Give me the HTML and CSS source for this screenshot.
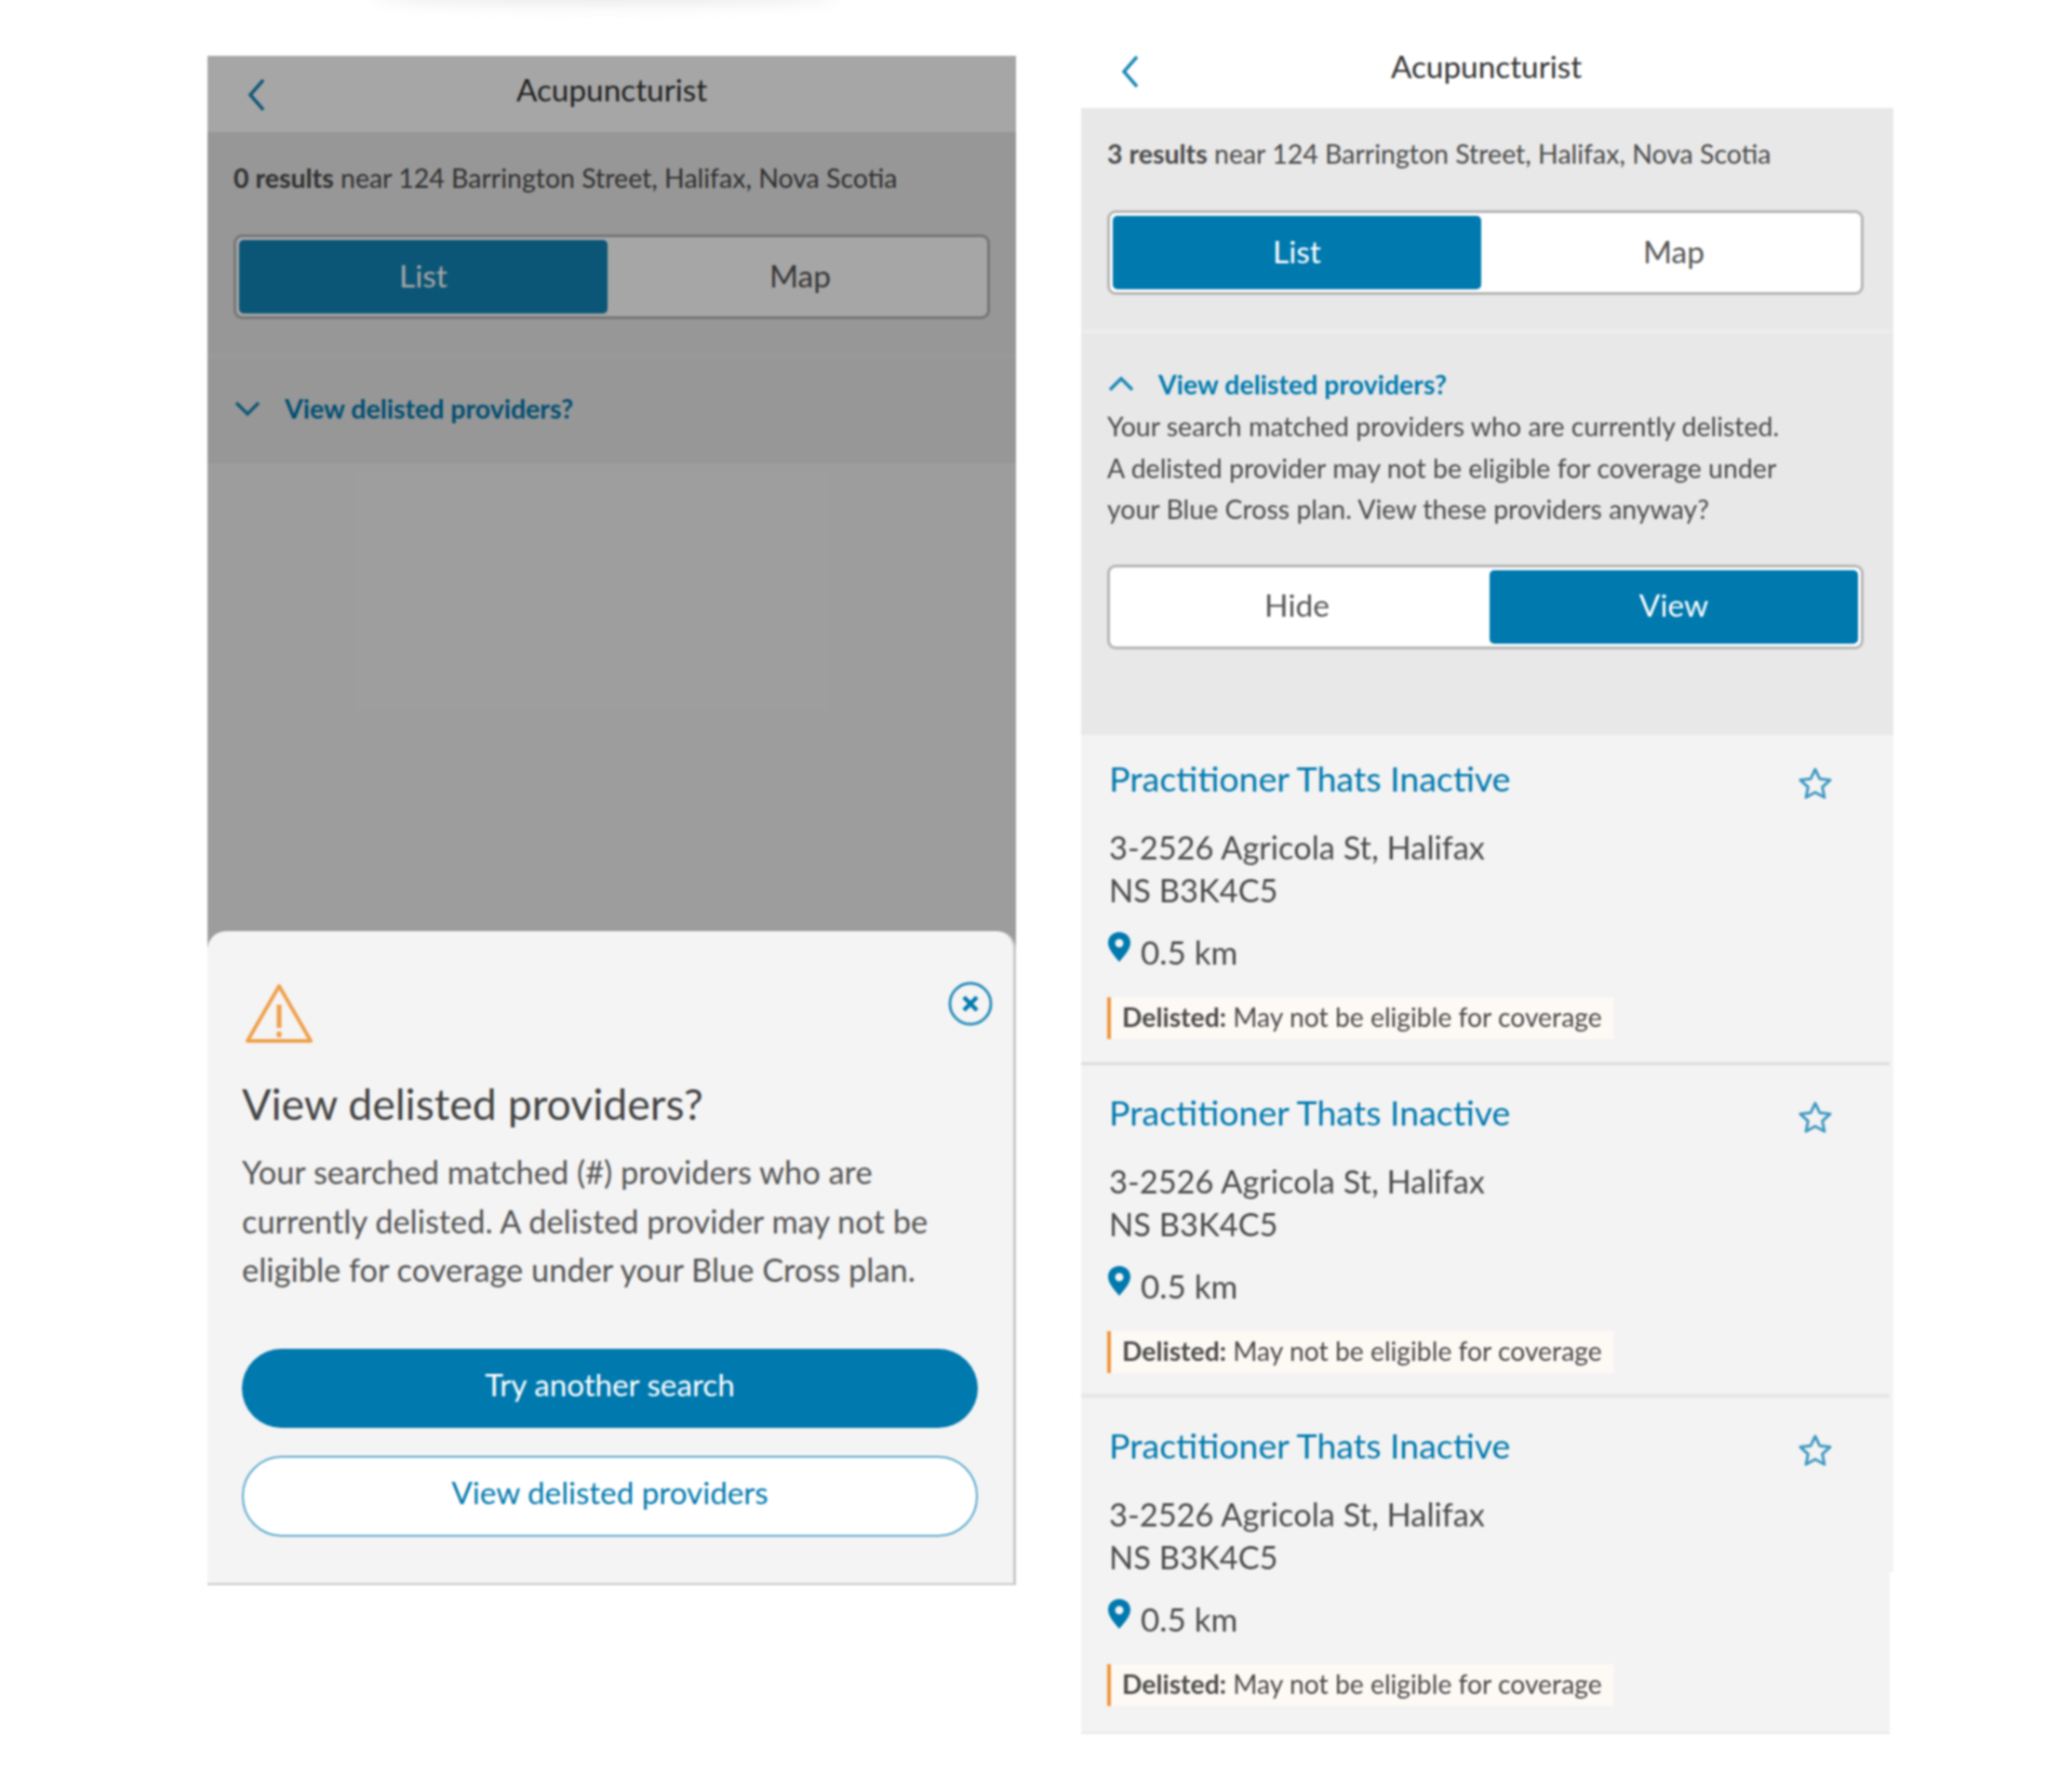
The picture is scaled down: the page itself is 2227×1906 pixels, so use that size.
FILE: index.html
```html
<!DOCTYPE html>
<html lang="en">
<head>
  <meta charset="UTF-8" />
  <title>Acupuncturist - delisted providers</title>
  <link rel="stylesheet" href="styles.css">
</head>
<body>
  <div class="smudge"></div>
  <main class="screens">

    <!-- NO RESULTS, WITH BOTTOM SHEET -->
    <section class="phone phone-left">
      <header class="nav">
        <svg class="back" viewBox="0 0 24 40"><path d="M19 4 5 20l14 16"/></svg>
        <h1>Acupuncturist</h1>
      </header>
      <div class="panel">
        <p class="results"><b>0 results</b> near 124 Barrington Street, Halifax, Nova Scotia</p>
        <div class="toggle">
          <span class="seg on">List</span>
          <span class="seg">Map</span>
        </div>
      </div>
      <div class="panel delisted closed">
        <div class="link-row">
          <svg class="chev" viewBox="0 0 30 18"><path d="M3 3l12 12L27 3"/></svg>
          <a>View delisted providers?</a>
        </div>
      </div>
      <div class="overlay"></div>
      <div class="sheet">
        <div class="sheet-top">
          <svg class="warn" viewBox="0 0 76 68"><path d="M38 4 4 63h68z"/><path class="mark" d="M38 24v25M38 53v6"/></svg>
          <svg class="close" viewBox="0 0 48 48"><circle cx="24" cy="24" r="22"/><path d="M17 17l14 14M31 17 17 31"/></svg>
        </div>
        <h2>View delisted providers?</h2>
        <p class="sheet-text">Your searched matched (#) providers who are<br>currently delisted. A delisted provider may not be<br>eligible for coverage under your Blue Cross plan.</p>
        <button class="btn btn-main">Try another search</button>
        <button class="btn btn-alt">View delisted providers</button>
      </div>
    </section>

    <!-- THREE RESULTS -->
    <section class="phone phone-right">
      <header class="nav">
        <svg class="back" viewBox="0 0 24 40"><path d="M19 4 5 20l14 16"/></svg>
        <h1>Acupuncturist</h1>
      </header>
      <div class="panel">
        <p class="results"><b>3 results</b> near 124 Barrington Street, Halifax, Nova Scotia</p>
        <div class="toggle">
          <span class="seg on">List</span>
          <span class="seg">Map</span>
        </div>
      </div>
      <div class="panel delisted open">
        <div class="link-row">
          <svg class="chev" viewBox="0 0 30 18"><path d="M3 15 15 3l12 12"/></svg>
          <a>View delisted providers?</a>
        </div>
        <p class="note">Your search matched providers who are currently delisted.<br>A delisted provider may not be eligible for coverage under<br>your Blue Cross plan. View these providers anyway?</p>
        <div class="toggle">
          <span class="seg">Hide</span>
          <span class="seg on">View</span>
        </div>
      </div>

      <div class="cards">
        <article class="card">
          <div class="card-head">
            <h3>Practitioner Thats Inactive</h3>
            <svg class="star" viewBox="0 0 40 40"><path d="M20 5l4.800 10.200 11.200 1.400-8.300 7.600 2.200 11L20 29.800l-9.900 5.400 2.200-11L4 16.600l11.200-1.400z"/></svg>
          </div>
          <p class="addr">3-2526 Agricola St, Halifax<br>NS B3K4C5</p>
          <p class="dist"><svg class="pin" viewBox="0 0 26 34"><path fill-rule="evenodd" d="M13 1C6 1 1 6 1 12.500 1 20 9 28 13 33c4-5 12-13 12-20.500C25 6 20 1 13 1zm0 7.500a4.500 4.500 0 1 1 0 9 4.500 4.500 0 0 1 0-9z"/></svg>0.5 km</p>
          <p class="tag"><b>Delisted:</b> May not be eligible for coverage</p>
        </article>
        <article class="card">
          <div class="card-head">
            <h3>Practitioner Thats Inactive</h3>
            <svg class="star" viewBox="0 0 40 40"><path d="M20 5l4.800 10.200 11.200 1.400-8.300 7.600 2.200 11L20 29.800l-9.900 5.400 2.200-11L4 16.600l11.200-1.400z"/></svg>
          </div>
          <p class="addr">3-2526 Agricola St, Halifax<br>NS B3K4C5</p>
          <p class="dist"><svg class="pin" viewBox="0 0 26 34"><path fill-rule="evenodd" d="M13 1C6 1 1 6 1 12.500 1 20 9 28 13 33c4-5 12-13 12-20.500C25 6 20 1 13 1zm0 7.500a4.500 4.500 0 1 1 0 9 4.500 4.500 0 0 1 0-9z"/></svg>0.5 km</p>
          <p class="tag"><b>Delisted:</b> May not be eligible for coverage</p>
        </article>
        <article class="card">
          <div class="card-head">
            <h3>Practitioner Thats Inactive</h3>
            <svg class="star" viewBox="0 0 40 40"><path d="M20 5l4.800 10.200 11.200 1.400-8.300 7.600 2.200 11L20 29.800l-9.900 5.400 2.200-11L4 16.600l11.200-1.400z"/></svg>
          </div>
          <p class="addr">3-2526 Agricola St, Halifax<br>NS B3K4C5</p>
          <p class="dist"><svg class="pin" viewBox="0 0 26 34"><path fill-rule="evenodd" d="M13 1C6 1 1 6 1 12.500 1 20 9 28 13 33c4-5 12-13 12-20.500C25 6 20 1 13 1zm0 7.500a4.500 4.500 0 1 1 0 9 4.500 4.500 0 0 1 0-9z"/></svg>0.5 km</p>
          <p class="tag"><b>Delisted:</b> May not be eligible for coverage</p>
        </article>
      </div>
    </section>

  </main>
</body>
</html>
```
FILE: styles.css
```css
html, body {
  margin: 0;
  background: #ffffff;
}
body {
  position: relative;
  height: 1906px;
  overflow: hidden;
  font-family: Lato, "Open Sans", sans-serif;
  color: #4a4a4a;
}
p, h1, h2, h3 {
  margin: 0;
  font-weight: 400;
}
svg {
  display: block;
  flex: none;
}
.smudge {
  position: absolute;
  top: -16px;
  left: 400px;
  width: 500px;
  height: 20px;
  border-radius: 50%;
  background: #e8e8e8;
  filter: blur(9px);
}
.screens {
  display: flex;
  align-items: flex-start;
  gap: 70px;
  padding-left: 223px;
  filter: blur(1px);
}
.phone {
  position: relative;
  width: 869px;
}
.phone-left {
  height: 1644px;
  margin-top: 60px;
  background: #f2f2f2;
}
.phone-right {
  width: 873px;
  margin-top: 34px;
}

/* nav */
.nav {
  display: flex;
  justify-content: center;
  align-items: center;
  position: relative;
  height: 82px;
  background: #ffffff;
}
.nav h1 {
  font-size: 33.3px;
  color: #333;
  margin-top: -10px;
}
.phone-right .nav {
  padding-right: 2px;
}
.phone-right .nav h1 {
  margin-top: -8px;
}
.back {
  position: absolute;
  left: 41px;
  top: 22px;
  width: 24px;
  height: 40px;
  fill: none;
  stroke: #1a86b6;
  stroke-width: 3.5;
}
.phone-right .back {
  top: 23px;
}

/* blocs gris */
.panel {
  padding: 33px 32px 37px 28px;
  background: #e8e8e8;
}
.phone-left .panel {
  padding-right: 28px;
}
.results {
  font-size: 28.5px;
  line-height: 32px;
  margin-bottom: 45px;
}
.results b {
  font-weight: 700;
}
.toggle {
  display: flex;
  justify-content: space-between;
  height: 91px;
  box-sizing: border-box;
  padding: 3px;
  background: #ffffff;
  border: 3px solid #b5b5b5;
  border-radius: 9px;
}
.seg {
  flex: 0 0 396px;
  display: flex;
  justify-content: center;
  align-items: center;
  padding-bottom: 4px;
  box-sizing: border-box;
  font-size: 33.5px;
  color: #555;
}
.seg.on {
  background: #0079ae;
  color: #ffffff;
  border-radius: 5px;
}
.phone-left .seg.on {
  background: #1184b5;
}
.delisted {
  border-top: 5px solid #ececec;
  padding-top: 0;
  padding-bottom: 0;
}
.delisted.closed {
  height: 118px;
  display: flex;
  align-items: center;
  box-sizing: border-box;
  padding-bottom: 6px;
}
.delisted.open {
  height: 436px;
  padding-top: 38px;
  box-sizing: border-box;
}
.link-row {
  display: flex;
  align-items: center;
  gap: 25px;
}
.link-row a {
  font-size: 28.5px;
  font-weight: 700;
  line-height: 32px;
  color: #0079ae;
}
.chev {
  width: 30px;
  height: 18px;
  fill: none;
  stroke: #1a86b6;
  stroke-width: 3.5;
}
.note {
  font-size: 28.5px;
  line-height: 44.5px;
  margin-top: 7px;
  margin-bottom: 37px;
}

/* cartes */
.cards {
  position: relative;
}
.cards::after {
  content: "";
  position: absolute;
  top: 0;
  left: 869px;
  width: 4px;
  height: 900px;
  background: #f3f3f3;
}
.card {
  width: 869px;
  height: 355px;
  box-sizing: border-box;
  padding: 26px 30px 0;
  background: #f3f3f3;
  border-bottom: 3px solid #dcdcdc;
}
.card:nth-child(2) {
  height: 358px;
  padding-top: 30px;
  border-bottom: 5px solid #e8e8e8;
}
.card:nth-child(3) {
  height: 361px;
  padding-top: 30px;
  border-bottom: 2px solid #e8e8e8;
}
.card-head {
  display: flex;
  justify-content: space-between;
  align-items: flex-start;
  padding-right: 30px;
}
.card h3 {
  font-size: 37.5px;
  line-height: 42px;
  color: #0079ae;
}
.star {
  width: 40px;
  height: 40px;
  margin-top: 6px;
  fill: none;
  stroke: #3f98c2;
  stroke-width: 3;
  stroke-linejoin: round;
}
.addr {
  font-size: 34.4px;
  line-height: 45.5px;
  margin-top: 26px;
}
.dist {
  display: flex;
  align-items: center;
  gap: 10px;
  font-size: 35px;
  line-height: 40px;
  margin-top: 24px;
  margin-left: -2px;
}
.pin {
  width: 26px;
  height: 34px;
  margin-top: -10px;
  fill: #0079ae;
}
.tag {
  display: inline-block;
  margin-top: 29px;
  margin-left: -2px;
  padding: 0 13px 0 12px;
  height: 45px;
  line-height: 43px;
  font-size: 28.3px;
  background: #fdf9f5;
  border-left: 4px solid #f0963c;
}
.tag b {
  font-weight: 700;
}

/* voile + bottom sheet */
.overlay {
  position: absolute;
  inset: 0;
  background: rgba(0, 0, 0, 0.35);
}
.sheet {
  position: absolute;
  left: 0;
  right: 0;
  bottom: 0;
  height: 703px;
  box-sizing: border-box;
  padding: 55px 37px 0;
  background: #f4f4f4;
  border-right: 3px solid #c8c8c8;
  border-bottom: 2px solid #c8c8c8;
  border-radius: 20px 20px 0 0;
}
.sheet-top {
  display: flex;
  justify-content: space-between;
  padding-left: 2px;
}
.warn {
  width: 76px;
  height: 68px;
  fill: none;
  stroke: #f0a04b;
  stroke-width: 4;
  stroke-linejoin: round;
}
.warn .mark {
  stroke-width: 5;
}
.close {
  width: 48px;
  height: 48px;
  margin-top: -1px;
  margin-right: -15px;
  fill: none;
  stroke: #2a8dba;
  stroke-width: 3;
}
.close path {
  stroke-width: 4.5;
  stroke: #0079ae;
}
.sheet h2 {
  font-size: 46.4px;
  line-height: 50px;
  color: #444;
  margin-top: 37px;
}
.sheet-text {
  font-size: 34.4px;
  line-height: 52.5px;
  color: #555;
  margin-top: 23px;
  margin-bottom: 58px;
}
.btn {
  display: block;
  width: 791px;
  height: 85px;
  padding: 0 0 9px;
  border-radius: 43px;
  font-family: Lato, "Open Sans", sans-serif;
  font-size: 33.2px;
}
.btn-main {
  background: #0079ae;
  border: none;
  color: #ffffff;
  margin-bottom: 30px;
}
.btn-alt {
  height: 87px;
  background: #ffffff;
  border: 2px solid #5aa8cb;
  color: #0079ae;
}
```
